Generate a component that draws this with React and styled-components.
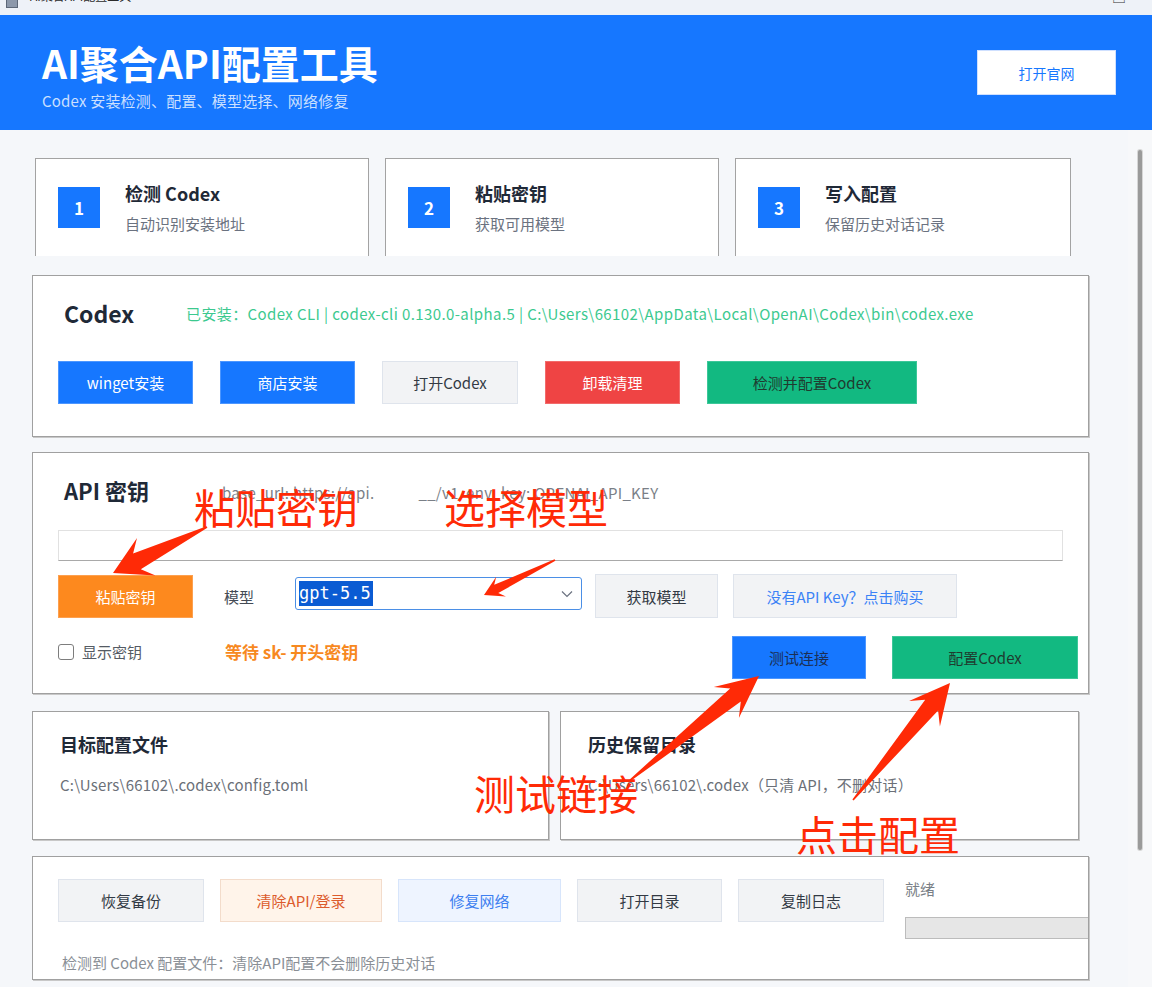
import styled, { createGlobalStyle } from "styled-components";

const GlobalStyle = createGlobalStyle`
  html, body {
    margin: 0;
    padding: 0;
    background: #f5f7fa;
  }
  body {
    font-family: "Noto Sans CJK SC", "Noto Sans", sans-serif;
    color: #1f2937;
  }
  * {
    box-sizing: border-box;
  }
`;

const steps = [
  { n: 1, title: "检测 Codex", sub: "自动识别安装地址" },
  { n: 2, title: "粘贴密钥", sub: "获取可用模型" },
  { n: 3, title: "写入配置", sub: "保留历史对话记录" },
];

const codexActions = [
  { label: "winget安装", tone: "primary", w: 135 },
  { label: "商店安装", tone: "primary", w: 135 },
  { label: "打开Codex", tone: "neutral", w: 136 },
  { label: "卸载清理", tone: "danger", w: 135 },
  { label: "检测并配置Codex", tone: "success", w: 210 },
];

const toolActions = [
  { label: "恢复备份", tone: "neutral", w: 146 },
  { label: "清除API/登录", tone: "softOrange", w: 162 },
  { label: "修复网络", tone: "softBlue", w: 163 },
  { label: "打开目录", tone: "neutral", w: 145 },
  { label: "复制日志", tone: "neutral", w: 146 },
];

const tones = {
  primary: { bg: "#1677ff", fg: "#ffffff", bd: "#4c96ff" },
  primaryDim: { bg: "#1677ff", fg: "#1b2f55", bd: "#4c96ff" },
  success: { bg: "#12b981", fg: "#1f3b2f", bd: "#3cc799" },
  danger: { bg: "#ef4444", fg: "#ffffff", bd: "#f26b6b" },
  warn: { bg: "#fd891e", fg: "#ffffff", bd: "#fda04f" },
  neutral: { bg: "#f2f3f5", fg: "#333a44", bd: "#dfe4ec" },
  link: { bg: "#f2f3f5", fg: "#3b82f6", bd: "#dfe4ec" },
  softOrange: { bg: "#fff4ea", fg: "#dc5b2c", bd: "#f3dccb" },
  softBlue: { bg: "#eef4ff", fg: "#3d7ff0", bd: "#d7e5fb" },
};

// annotation arrows: tail -> tip, head length, head half width
const arrows = [
  { from: [207, 527], to: [113, 573], head: 37, half: 21 },
  { from: [555, 560], to: [484, 595], head: 19, half: 11 },
  { from: [628, 782], to: [759, 676], head: 42, half: 20 },
  { from: [853, 800], to: [950, 683], head: 40, half: 20 },
];

const notes = [
  { text: "粘贴密钥", x: 194, y: 486 },
  { text: "选择模型", x: 444, y: 486 },
  { text: "测试链接", x: 474, y: 772 },
  { text: "点击配置", x: 796, y: 813 },
];

const arrowPoints = ({ from, to, head, half }) => {
  const [x1, y1] = from;
  const [x2, y2] = to;
  const len = Math.hypot(x2 - x1, y2 - y1);
  const ux = (x2 - x1) / len;
  const uy = (y2 - y1) / len;
  const nx = -uy;
  const ny = ux;
  const neck = half * 0.42;
  const bx = x2 - ux * head;
  const by = y2 - uy * head;
  const kx = x2 - ux * head * 0.72;
  const ky = y2 - uy * head * 0.72;
  const pts = [
    [x1 + nx * 0.8, y1 + ny * 0.8],
    [kx + nx * neck, ky + ny * neck],
    [bx + nx * half, by + ny * half],
    [x2, y2],
    [bx - nx * half, by - ny * half],
    [kx - nx * neck, ky - ny * neck],
    [x1 - nx * 0.8, y1 - ny * 0.8],
  ];
  return pts.map((p) => p.map((v) => v.toFixed(1)).join(",")).join(" ");
};

export default function App() {
  return (
    <Window>
      <GlobalStyle />
      <TitleBar>
        <AppIcon />
        <TitleText>AI聚合API配置工具</TitleText>
        <WinControls>
          <span>—</span>
          <span>□</span>
        </WinControls>
      </TitleBar>

      <Header>
        <Brand>
          <BrandTitle>AI聚合API配置工具</BrandTitle>
          <BrandSub>Codex 安装检测、配置、模型选择、网络修复</BrandSub>
        </Brand>
        <SiteButton>打开官网</SiteButton>
      </Header>

      <Body>
        <Content>
          <StepsRow>
            {steps.map((s) => (
              <StepCard key={s.n}>
                <StepInner>
                  <StepNum>{s.n}</StepNum>
                  <StepText>
                    <StepTitle>{s.title}</StepTitle>
                    <StepSub>{s.sub}</StepSub>
                  </StepText>
                </StepInner>
              </StepCard>
            ))}
          </StepsRow>

          <Panel $mt={19} $h={162}>
            <HeadRow>
              <SectionTitle $w={122} $size={23}>
                Codex
              </SectionTitle>
              <Installed>
                已安装：Codex CLI | codex-cli 0.130.0-alpha.5 | C:\Users\66102\AppData\Local\OpenAI\Codex\bin\codex.exe
              </Installed>
            </HeadRow>
            <ButtonRow $gap={27} $mt={33}>
              {codexActions.map((a) => (
                <Button key={a.label} $tone={a.tone} $w={a.w}>
                  {a.label}
                </Button>
              ))}
            </ButtonRow>
          </Panel>

          <Panel $mt={15} $h={242}>
            <HeadRow>
              <SectionTitle $w={158} $size={22}>
                API 密钥
              </SectionTitle>
              <MetaLine>
                base_url: https://api.
                <Redact />
                __/v1 &nbsp;env_key: OPENAI_API_KEY
              </MetaLine>
            </HeadRow>
            <KeyInput />
            <ModelRow>
              <Button $tone="warn" $w={135}>
                粘贴密钥
              </Button>
              <FieldLabel>模型</FieldLabel>
              <ModelSelect>
                <Selected>gpt-5.5</Selected>
                <svg width="12" height="8" viewBox="0 0 12 8">
                  <polyline
                    points="1,1.5 6,6.5 11,1.5"
                    fill="none"
                    stroke="#6b7280"
                    strokeWidth="1.2"
                  />
                </svg>
              </ModelSelect>
              <Button $tone="neutral" $w={123} $h={44}>
                获取模型
              </Button>
              <Button $tone="link" $w={224} $h={44} $ml={15}>
                没有API Key？点击购买
              </Button>
            </ModelRow>
            <ActionRow>
              <StatusGroup>
                <ShowKey>
                  <CheckBox />
                  显示密钥
                </ShowKey>
                <Waiting>等待 sk- 开头密钥</Waiting>
              </StatusGroup>
              <Button $tone="primaryDim" $w={134}>
                测试连接
              </Button>
              <Button $tone="success" $w={186}>
                配置Codex
              </Button>
            </ActionRow>
          </Panel>

          <CardsRow>
            <InfoCard>
              <InfoTitle>目标配置文件</InfoTitle>
              <InfoPath>C:\Users\66102\.codex\config.toml</InfoPath>
            </InfoCard>
            <InfoCard>
              <InfoTitle>历史保留目录</InfoTitle>
              <InfoPath>C:\Users\66102\.codex（只清 API，不删对话）</InfoPath>
            </InfoCard>
          </CardsRow>

          <Panel $mt={16} $h={124} $clip>
            <ToolsRow>
              {toolActions.map((a) => (
                <Button key={a.label} $tone={a.tone} $w={a.w}>
                  {a.label}
                </Button>
              ))}
              <StatusCol>
                <Ready>就绪</Ready>
                <Progress />
              </StatusCol>
            </ToolsRow>
            <FootNote>检测到 Codex 配置文件：清除API配置不会删除历史对话</FootNote>
          </Panel>
        </Content>
        <ScrollTrack>
          <ScrollThumb />
        </ScrollTrack>
      </Body>

      <Annotations>
        <svg width="1152" height="987" viewBox="0 0 1152 987">
          {arrows.map((a, i) => (
            <polygon key={i} points={arrowPoints(a)} fill="#ff2a06" />
          ))}
        </svg>
        {notes.map((n) => (
          <Note key={n.text} style={{ left: n.x, top: n.y }}>
            {n.text}
          </Note>
        ))}
      </Annotations>
    </Window>
  );
}

const Window = styled.div`
  position: relative;
  width: 1152px;
  height: 987px;
  overflow: hidden;
  background: #f5f7fa;
`;

const TitleBar = styled.div`
  height: 15px;
  padding: 0 0 11px 6px;
  display: flex;
  align-items: flex-end;
  gap: 12px;
  overflow: hidden;
  background: #eef2f8;
  font-size: 12px;
  line-height: 16px;
  color: #2b2b2b;
`;

const AppIcon = styled.div`
  width: 12px;
  height: 10px;
  margin-bottom: -4px;
  background: #8d99ab;
  border: 1px solid #5d6878;
`;

const TitleText = styled.span`
  white-space: nowrap;
`;

const WinControls = styled.div`
  margin-left: auto;
  display: flex;
  gap: 48px;
  padding-right: 26px;
  font-size: 14px;
  color: #333;
`;

const Header = styled.header`
  height: 115px;
  padding: 0 36px 0 42px;
  display: flex;
  align-items: center;
  justify-content: space-between;
  background: #1677ff;
`;

const Brand = styled.div`
  display: flex;
  flex-direction: column;
  gap: 8px;
  padding-top: 4px;
`;

const BrandTitle = styled.h1`
  margin: 0;
  font-size: 39px;
  font-weight: 700;
  line-height: 44px;
  color: #ffffff;
`;

const BrandSub = styled.div`
  font-size: 15px;
  line-height: 18px;
  letter-spacing: 0.2px;
  color: rgba(255, 255, 255, 0.78);
`;

const SiteButton = styled.button`
  width: 139px;
  height: 45px;
  padding: 0;
  border: 1px solid #cfe0ff;
  border-radius: 0;
  background: #ffffff;
  color: #1677ff;
  font-family: inherit;
  font-size: 14px;
`;

const Body = styled.div`
  display: flex;
  height: 857px;
`;

const Content = styled.main`
  flex: 1;
  padding: 28px 0 0 32px;
  display: flex;
  flex-direction: column;
`;

const ScrollTrack = styled.div`
  width: 24px;
  padding: 20px 0 0 10px;
  background: #f7f8fa;
`;

const ScrollThumb = styled.div`
  width: 4px;
  height: 700px;
  border-radius: 2px;
  background: #9a9a9a;
  box-shadow: 0 0 0 1px #d6d6d6;
`;

const StepsRow = styled.div`
  margin-left: 3px;
  height: 98px;
  overflow: hidden;
  display: grid;
  grid-template-columns: 334px 334px 336px;
  column-gap: 16px;
`;

const StepCard = styled.div`
  height: 130px;
  padding: 22px 22px 0;
  background: #ffffff;
  border: 1px solid #a3a3a3;
`;

const StepInner = styled.div`
  display: flex;
  align-items: center;
  gap: 25px;
`;

const StepNum = styled.div`
  width: 42px;
  height: 41px;
  display: flex;
  align-items: center;
  justify-content: center;
  background: #1677ff;
  color: #ffffff;
  font-size: 17px;
  font-weight: 700;
`;

const StepText = styled.div`
  display: flex;
  flex-direction: column;
  gap: 9px;
`;

const StepTitle = styled.div`
  font-size: 18px;
  font-weight: 700;
  line-height: 24px;
  color: #1f2937;
`;

const StepSub = styled.div`
  font-size: 15px;
  line-height: 20px;
  color: #6b7280;
`;

const Panel = styled.section`
  width: 1057px;
  height: ${({ $h }) => $h}px;
  margin-top: ${({ $mt }) => $mt}px;
  padding: 22px 0 0 25px;
  background: #ffffff;
  border: 1px solid #a0a0a0;
  box-shadow: 1px 1px 0 #c8c8c8;
  overflow: ${({ $clip }) => ($clip ? "hidden" : "visible")};
`;

const HeadRow = styled.div`
  height: 30px;
  padding-left: 6px;
  display: flex;
  align-items: center;
`;

const SectionTitle = styled.h2`
  margin: 0;
  width: ${({ $w }) => $w}px;
  flex: none;
  font-size: ${({ $size }) => $size}px;
  font-weight: 700;
  line-height: 30px;
  color: #1f2937;
`;

const Installed = styled.div`
  font-size: 15px;
  letter-spacing: 0.4px;
  white-space: nowrap;
  color: #3cc98f;
`;

const MetaLine = styled.div`
  margin-top: 4px;
  font-size: 15px;
  letter-spacing: 0.3px;
  white-space: nowrap;
  color: #7a7f87;
`;

const Redact = styled.span`
  display: inline-block;
  width: 44px;
`;

const ButtonRow = styled.div`
  margin-top: ${({ $mt }) => $mt}px;
  display: flex;
  gap: ${({ $gap }) => $gap}px;
`;

const Button = styled.button`
  flex: none;
  width: ${({ $w }) => $w}px;
  height: ${({ $h }) => $h || 43}px;
  margin-left: ${({ $ml }) => $ml || 0}px;
  padding: 0;
  border: 1px solid ${({ $tone }) => tones[$tone].bd};
  border-radius: 0;
  background: ${({ $tone }) => tones[$tone].bg};
  color: ${({ $tone }) => tones[$tone].fg};
  font-family: inherit;
  font-size: 15px;
  white-space: nowrap;
  cursor: pointer;
`;

const KeyInput = styled.div`
  width: 1005px;
  height: 31px;
  margin-top: 25px;
  background: #ffffff;
  border: 1px solid #e1e1e1;
  border-bottom-color: #a9a9a9;
`;

const ModelRow = styled.div`
  margin-top: 13px;
  height: 44px;
  display: flex;
  align-items: center;
`;

const FieldLabel = styled.span`
  width: 102px;
  padding-left: 31px;
  font-size: 15px;
  color: #444b55;
`;

const ModelSelect = styled.div`
  width: 287px;
  height: 33px;
  margin-right: 13px;
  margin-top: -5px;
  padding: 0 8px 0 3px;
  display: flex;
  align-items: center;
  justify-content: space-between;
  background: #ffffff;
  border: 1px solid #4b8fe6;
  border-radius: 3px;
`;

const Selected = styled.span`
  font-family: "DejaVu Sans Mono", "Liberation Mono", monospace;
  font-size: 17px;
  line-height: 25px;
  padding-right: 2px;
  background: #0a5bd3;
  color: #ffffff;
`;

const ActionRow = styled.div`
  margin-top: 18px;
  height: 43px;
  display: flex;
  align-items: center;
  gap: 26px;
`;

const StatusGroup = styled.div`
  width: 648px;
  margin-bottom: 12px;
  display: flex;
  align-items: center;
`;

const ShowKey = styled.label`
  width: 167px;
  display: flex;
  align-items: center;
  gap: 8px;
  font-size: 15px;
  color: #555b64;
`;

const CheckBox = styled.span`
  width: 16px;
  height: 16px;
  border: 1px solid #7d7d7d;
  border-radius: 3px;
  background: #ffffff;
`;

const Waiting = styled.span`
  font-size: 17px;
  font-weight: 700;
  color: #f7891f;
`;

const CardsRow = styled.div`
  margin-top: 17px;
  display: grid;
  grid-template-columns: 517px 519px;
  column-gap: 11px;
`;

const InfoCard = styled.div`
  height: 129px;
  padding: 19px 0 0 27px;
  background: #ffffff;
  border: 1px solid #a0a0a0;
  box-shadow: 1px 1px 0 #c8c8c8;
`;

const InfoTitle = styled.div`
  font-size: 18px;
  font-weight: 700;
  line-height: 26px;
  color: #1f2937;
`;

const InfoPath = styled.div`
  margin-top: 17px;
  font-size: 15px;
  letter-spacing: 0.2px;
  line-height: 22px;
  color: #6b7078;
  white-space: nowrap;
`;

const ToolsRow = styled.div`
  display: flex;
  gap: 16px;
`;

const StatusCol = styled.div`
  margin-left: 5px;
  display: flex;
  flex-direction: column;
`;

const Ready = styled.div`
  font-size: 15px;
  line-height: 20px;
  color: #7a7f87;
`;

const Progress = styled.div`
  width: 200px;
  height: 22px;
  margin-top: 18px;
  background: #e6e6e6;
  border: 1px solid #bcbcbc;
`;

const FootNote = styled.div`
  margin-top: 13px;
  padding-left: 4px;
  font-size: 15px;
  line-height: 22px;
  color: #8a8f96;
`;

const Annotations = styled.div`
  position: absolute;
  inset: 0;
  pointer-events: none;
`;

const Note = styled.span`
  position: absolute;
  font-size: 41px;
  line-height: 41px;
  font-weight: 400;
  white-space: nowrap;
  color: #ff2a06;
`;
